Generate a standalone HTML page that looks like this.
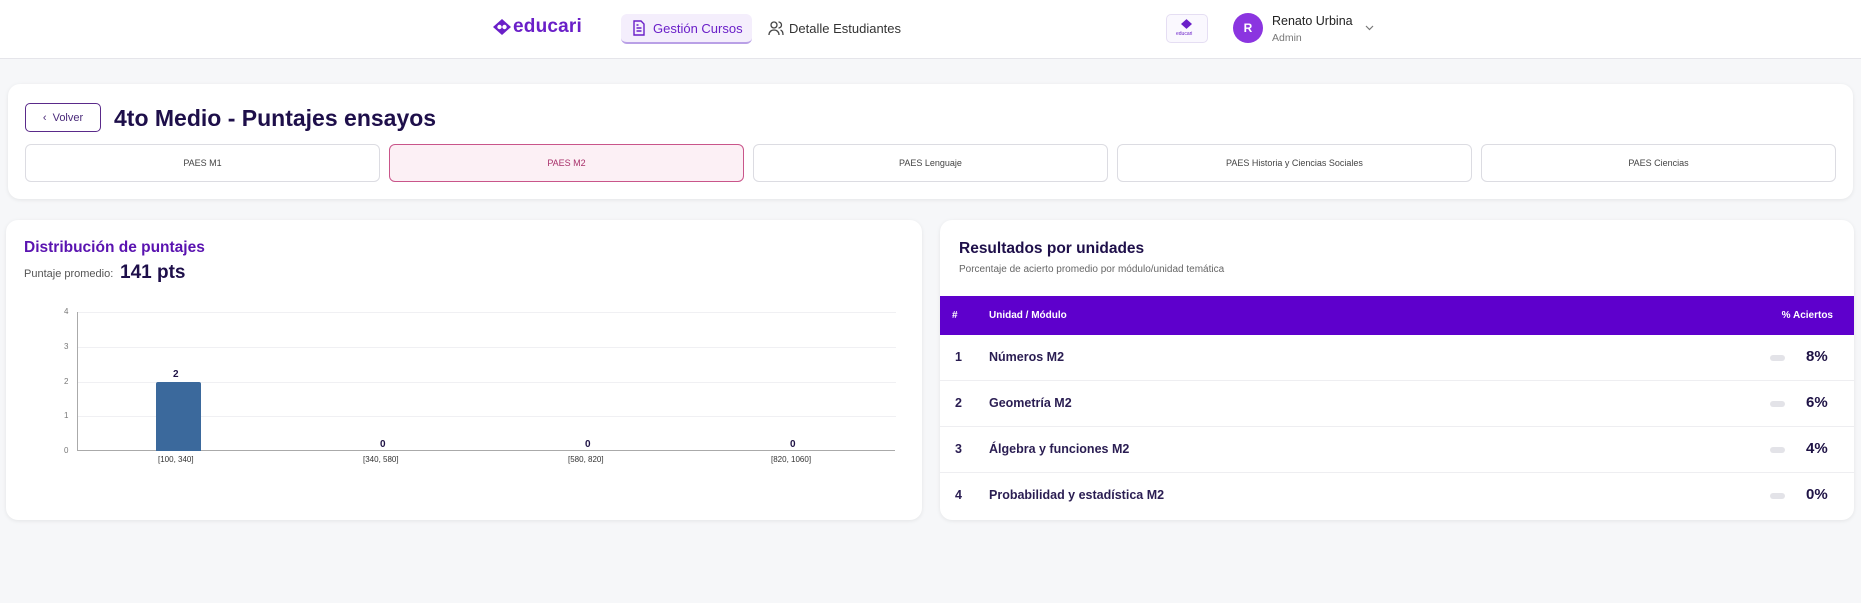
<!DOCTYPE html>
<html><head><meta charset="utf-8"><style>
*{box-sizing:border-box;margin:0;padding:0}
body{width:1861px;height:603px;background:#f6f7f9;font-family:"Liberation Sans",sans-serif;position:relative;overflow:hidden;color:#1e1245}
.a{position:absolute}
.hdr{left:0;top:0;width:1861px;height:59px;background:#fff;border-bottom:1px solid #e5e5ea}
.card{background:#fff;border-radius:12px;box-shadow:0 1px 4px rgba(0,0,0,.08)}
.tab{top:144px;width:355px;height:38px;border:1px solid #dcdce2;border-radius:6px;font-size:9px;color:#444;display:flex;align-items:center;justify-content:center;background:#fff}
.gl{height:1px;background:#f0f0f3;left:78px;width:818px}
.yl{font-size:8px;color:#777;left:64px}
.row{left:940px;width:914px;height:46px;border-bottom:1px solid #eeeef1;font-size:12.5px;font-weight:bold;color:#2a1d52}
.row span{position:absolute;top:15px}
.pill{position:absolute;left:830px;top:20px;width:15px;height:6px;border-radius:3px;background:#e3e3e8}
.pct{left:866px;font-size:15px!important;top:13px!important;color:#1e1245}
</style></head><body>
<div class="a hdr"></div>
<svg class="a" style="left:493px;top:19px" width="18" height="16" viewBox="0 0 18 16"><path d="M9 0L18 8L9 16L0 8Z" fill="#6a1fc8"/><circle cx="6.5" cy="8" r="2.2" fill="#fff"/><circle cx="11.5" cy="8" r="2.2" fill="#fff"/></svg>
<div class="a" style="left:513px;top:16px;font-size:19px;font-weight:600;color:#6a1fc8;letter-spacing:.2px">educari</div>
<div class="a" style="left:621px;top:14px;width:131px;height:30px;background:#f4eefc;border-radius:6px;border-bottom:2px solid #b9a0e6"></div>
<svg class="a" style="left:632px;top:20px" width="14" height="16" viewBox="0 0 14 16" fill="none" stroke="#6a1fc8" stroke-width="1.4"><path d="M2 1h7l3 3v11H2z"/><path d="M4.5 8h5M4.5 11h5M4.5 5h2"/></svg>
<div class="a" style="left:653px;top:21px;font-size:13px;color:#6a1fc8">Gestión Cursos</div>
<svg class="a" style="left:768px;top:20px" width="16" height="16" viewBox="0 0 16 16" fill="none" stroke="#444" stroke-width="1.3"><circle cx="6" cy="5" r="3"/><path d="M1 15c0-3 2-5 5-5s5 2 5 5M10.5 2a3 3 0 010 6M12.5 10c1.5.5 2.5 2.5 2.5 5"/></svg>
<div class="a" style="left:789px;top:21px;font-size:13px;color:#333">Detalle Estudiantes</div>
<div class="a" style="left:1166px;top:14px;width:42px;height:29px;border:1px solid #e5def3;border-radius:5px;background:#faf8fe"></div>
<svg class="a" style="left:1181px;top:19px" width="11" height="10" viewBox="0 0 18 16"><path d="M9 0L18 8L9 16L0 8Z" fill="#6a1fc8"/></svg>
<div class="a" style="left:1176px;top:31px;font-size:5px;color:#6a1fc8">educari</div>
<div class="a" style="left:1233px;top:13px;width:30px;height:30px;border-radius:50%;background:#8b35e0;color:#fff;font-weight:bold;font-size:12px;text-align:center;line-height:30px">R</div>
<div class="a" style="left:1272px;top:14px;font-size:12.5px;color:#222">Renato Urbina</div>
<div class="a" style="left:1272px;top:32px;font-size:10.5px;color:#777">Admin</div>
<svg class="a" style="left:1365px;top:25px" width="9" height="6" viewBox="0 0 9 6" fill="none" stroke="#777" stroke-width="1.2"><path d="M1 1l3.5 3.5L8 1"/></svg>

<div class="a card" style="left:8px;top:84px;width:1845px;height:115px"></div>
<div class="a" style="left:25px;top:103px;width:76px;height:29px;border:1.5px solid #5a2a8a;border-radius:5px;font-size:11px;color:#4a2a7a;display:flex;align-items:center;justify-content:center">‹&nbsp;&nbsp;Volver</div>
<div class="a" style="left:114px;top:105px;font-size:23px;font-weight:bold;color:#1e0f4a">4to Medio - Puntajes ensayos</div>
<div class="a tab" style="left:25px">PAES M1</div>
<div class="a tab" style="left:389px;background:#fcf0f5;border-color:#c9558a;color:#a8306a">PAES M2</div>
<div class="a tab" style="left:753px">PAES Lenguaje</div>
<div class="a tab" style="left:1117px">PAES Historia y Ciencias Sociales</div>
<div class="a tab" style="left:1481px">PAES Ciencias</div>

<div class="a card" style="left:6px;top:220px;width:916px;height:300px"></div>
<div class="a" style="left:24px;top:239px;font-size:15.5px;font-weight:bold;color:#5a13b0">Distribución de puntajes</div>
<div class="a" style="left:24px;top:268px;font-size:11px;color:#555">Puntaje promedio:</div>
<div class="a" style="left:120px;top:262px;font-size:19px;font-weight:bold;color:#1e0f4a">141 pts</div>
<div class="a gl" style="top:312px"></div><div class="a gl" style="top:347px"></div><div class="a gl" style="top:382px"></div><div class="a gl" style="top:416px"></div>
<div class="a" style="left:77px;top:312px;width:1px;height:139px;background:#aaa"></div>
<div class="a" style="left:77px;top:450px;width:818px;height:1px;background:#aaa"></div>
<div class="a yl" style="top:307px">4</div><div class="a yl" style="top:342px">3</div><div class="a yl" style="top:377px">2</div><div class="a yl" style="top:411px">1</div><div class="a yl" style="top:446px">0</div>
<div class="a" style="left:156px;top:382px;width:45px;height:69px;background:#3b699c;border-radius:2px 2px 0 0"></div>
<div class="a" style="left:173px;top:369px;font-size:10px;font-weight:bold">2</div>
<div class="a" style="left:380px;top:439px;font-size:10px;font-weight:bold">0</div>
<div class="a" style="left:585px;top:439px;font-size:10px;font-weight:bold">0</div>
<div class="a" style="left:790px;top:439px;font-size:10px;font-weight:bold">0</div>
<div class="a" style="left:158px;top:455px;font-size:8px;color:#333">[100, 340]</div>
<div class="a" style="left:363px;top:455px;font-size:8px;color:#333">[340, 580]</div>
<div class="a" style="left:568px;top:455px;font-size:8px;color:#333">[580, 820]</div>
<div class="a" style="left:771px;top:455px;font-size:8px;color:#333">[820, 1060]</div>

<div class="a card" style="left:940px;top:220px;width:914px;height:300px;overflow:hidden"></div>
<div class="a" style="left:959px;top:240px;font-size:15.5px;font-weight:bold;color:#1e0f4a">Resultados por unidades</div>
<div class="a" style="left:959px;top:264px;font-size:10px;color:#666">Porcentaje de acierto promedio por módulo/unidad temática</div>
<div class="a" style="left:940px;top:296px;width:914px;height:39px;background:#5e00cc;color:#fff;font-size:10px;font-weight:bold">
<span class="a" style="left:12px;top:14px">#</span><span class="a" style="left:49px;top:14px">Unidad / Módulo</span><span class="a" style="right:21px;top:14px">% Aciertos</span></div>
<div class="a row" style="top:335px"><span style="left:15px">1</span><span style="left:49px">Números M2</span><i class="pill"></i><span class="pct">8%</span></div>
<div class="a row" style="top:381px"><span style="left:15px">2</span><span style="left:49px">Geometría M2</span><i class="pill"></i><span class="pct">6%</span></div>
<div class="a row" style="top:427px"><span style="left:15px">3</span><span style="left:49px">Álgebra y funciones M2</span><i class="pill"></i><span class="pct">4%</span></div>
<div class="a row" style="top:473px;border:none"><span style="left:15px">4</span><span style="left:49px">Probabilidad y estadística M2</span><i class="pill"></i><span class="pct">0%</span></div>
</body></html>
